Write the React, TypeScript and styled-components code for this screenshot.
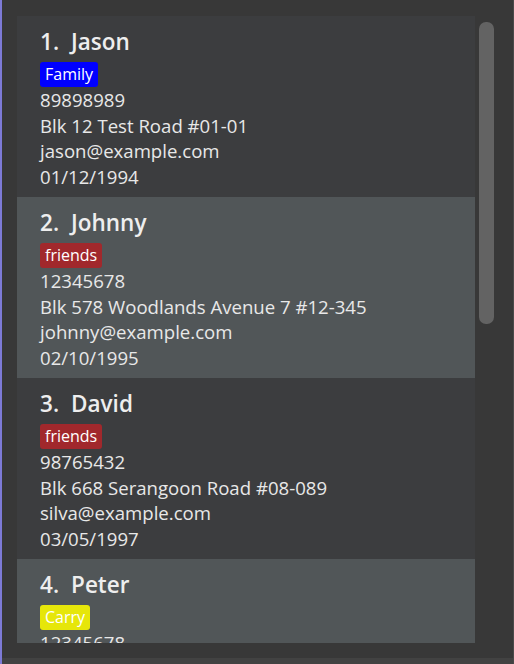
import React from "react";
import styled, { createGlobalStyle } from "styled-components";

const Global = createGlobalStyle`
  html, body { margin: 0; padding: 0; background: #383838; }
  body { font-family: "Open Sans", "Noto Sans", sans-serif; }
`;

const Frame = styled.div`
  width: 514px;
  height: 664px;
  box-sizing: border-box;
  border-left: 2px solid #7d7ad6;
  border-right: 1px solid #4a4a4a;
  background: #383838;
  display: flex;
  flex-direction: column;
  overflow: hidden;
`;

const Body = styled.div`
  flex: 1;
  display: flex;
  padding: 16px 4px 0 15px;
  gap: 4px;
  min-height: 0;
`;

const List = styled.div`
  width: 458px;
  height: 627px;
  overflow: hidden;
  display: flex;
  flex-direction: column;
`;

const Track = styled.div`
  width: 15px;
  padding-top: 6px;
`;

const Thumb = styled.div`
  width: 15px;
  height: 302px;
  background: #636363;
  border-radius: 7px;
`;

const Footer = styled.div`
  height: 6px;
  background: #424242;
  margin-top: 15px;
`;

const Card = styled.div<{ $alt: boolean }>`
  flex: 0 0 auto;
  height: 181px;
  box-sizing: border-box;
  background: ${(p) => (p.$alt ? "#515658" : "#3c3d3f")};
  padding: 10px 0 0 23px;
  color: #e8e8e8;
  display: flex;
  flex-direction: column;
`;

const Title = styled.div`
  display: flex;
  gap: 12px;
  font-size: 22.5px;
  font-weight: 600;
  line-height: 32px;
  color: #eeeeee;
`;

const Tag = styled.span<{ $bg: string }>`
  align-self: flex-start;
  background: ${(p) => p.$bg};
  color: #ffffff;
  font-size: 16px;
  line-height: 25px;
  padding: 0 5px;
  border-radius: 3px;
  margin: 4px 0 0;
`;

const Line = styled.div`
  font-size: 18.6px;
  line-height: 25.5px;
  white-space: nowrap;
`;

const people = [
  { name: "Jason", tag: "Family", bg: "#0000ff", phone: "89898989", addr: "Blk 12 Test Road #01-01", email: "jason@example.com", date: "01/12/1994" },
  { name: "Johnny", tag: "friends", bg: "#a1282c", phone: "12345678", addr: "Blk 578 Woodlands Avenue 7 #12-345", email: "johnny@example.com", date: "02/10/1995" },
  { name: "David", tag: "friends", bg: "#a1282c", phone: "98765432", addr: "Blk 668 Serangoon Road #08-089", email: "silva@example.com", date: "03/05/1997" },
  { name: "Peter", tag: "Carry", bg: "#e6e60a", phone: "12345678", addr: "Blk 1 Peter Street", email: "peter@example.com", date: "04/04/1998" },
];

export default function App() {
  return (
    <>
      <Global />
      <Frame>
        <Body>
          <List>
            {people.map((p, i) => (
              <Card key={i} $alt={i % 2 === 1}>
                <Title>
                  <span>{i + 1}.</span>
                  <span>{p.name}</span>
                </Title>
                <Tag $bg={p.bg}>{p.tag}</Tag>
                <Line>{p.phone}</Line>
                <Line>{p.addr}</Line>
                <Line>{p.email}</Line>
                <Line>{p.date}</Line>
              </Card>
            ))}
          </List>
          <Track>
            <Thumb />
          </Track>
        </Body>
        <Footer />
      </Frame>
    </>
  );
}
